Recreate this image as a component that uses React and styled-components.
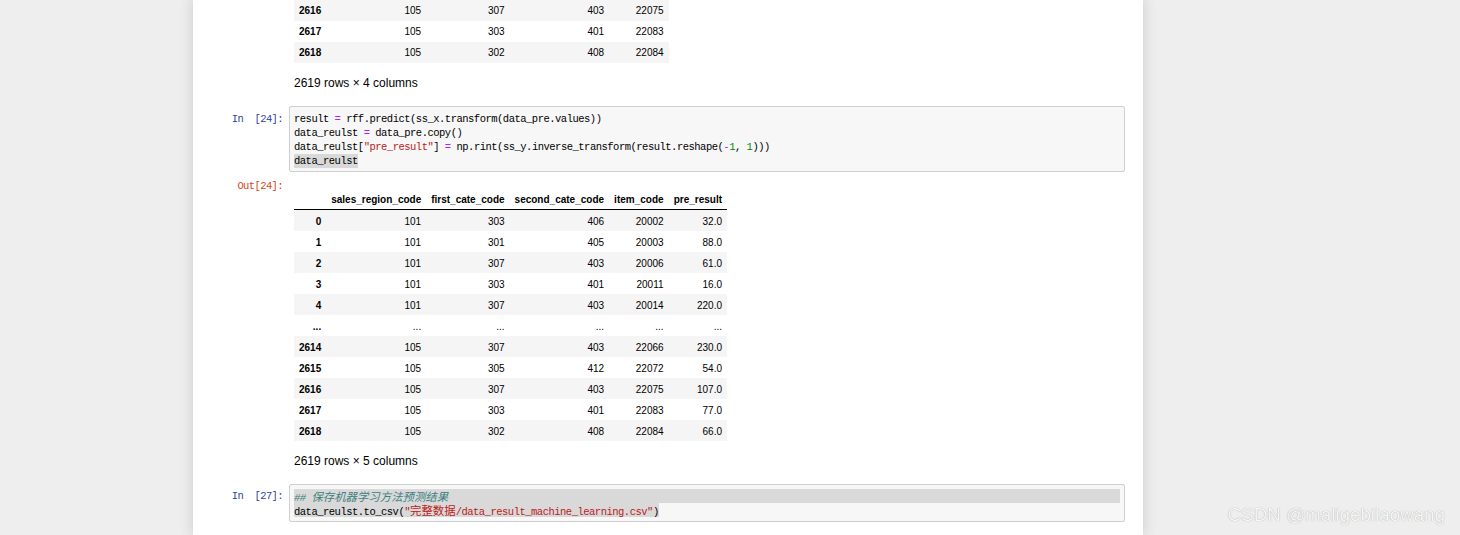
import React from 'react';
import styled, { createGlobalStyle } from 'styled-components';

const Global = createGlobalStyle`
  html, body { margin: 0; padding: 0; background: #eeeeee; }
  body { height: 535px; overflow: hidden; }
`;

const Page = styled.div`
  position: relative;
  height: 535px;
  overflow: hidden;
  background: #eeeeee;
`;

const Notebook = styled.div`
  margin-left: 193px;
  width: 950px;
  height: 535px;
  box-sizing: border-box;
  padding-right: 18px;
  background: #ffffff;
  box-shadow: 0 0 12px 1px rgba(87, 87, 87, 0.2);
  overflow: hidden;
`;

const Row = styled.div`
  display: flex;
  align-items: flex-start;
  margin-top: ${(p) => p.$mt || 0}px;
`;

const Prompt = styled.div`
  flex: 0 0 96px;
  box-sizing: border-box;
  padding-right: 6px;
  padding-top: ${(p) => p.$pt || 0}px;
  text-align: right;
  white-space: pre;
  font-family: "Liberation Mono", monospace;
  font-size: 10.5px;
  letter-spacing: -0.6px;
  line-height: 14px;
  color: ${(p) => (p.$out ? '#D84315' : '#303F9F')};
`;

const Body = styled.div`
  flex: 1 1 auto;
  min-width: 0;
  padding-left: 5px;
  padding-top: ${(p) => p.$pt || 0}px;
`;

const CodeBox = styled.div`
  flex: 1 1 auto;
  min-width: 0;
  background: #f7f7f7;
  border: 1px solid #cfcfcf;
  border-radius: 2px;
  padding: ${(p) => (p.$tight ? '4px 4px' : '5px 4px 3px')};
  font-family: "Liberation Mono", monospace;
  font-size: 10.5px;
  letter-spacing: -0.5px;
  color: #000;
`;

const Line = styled.div`
  height: 14px;
  line-height: 14px;
  white-space: pre;
  background: ${(p) => (p.$sel ? '#d9d9d9' : 'transparent')};
`;

const Sel = styled.span`
  display: inline-block;
  height: 14px;
  vertical-align: top;
  background: #d9d9d9;
`;

const Op = styled.span`color: #AA22FF;`;
const Num = styled.span`color: #008800;`;
const Str = styled.span`color: #BA2121;`;
const Cmt = styled.span`color: #408080; font-style: italic;`;
const Cjk = styled.span`
  font-family: "Noto Sans CJK SC", sans-serif;
  font-size: 11.4px;
  letter-spacing: 0;
`;

const Table = styled.table`
  border-collapse: collapse;
  border-spacing: 0;
  table-layout: fixed;
  width: ${(p) => p.$w}px;
  font-family: "Liberation Sans", Arial, sans-serif;
  font-size: 10px;
  color: #000;
`;

const Th = styled.th`
  padding: 6px 5px 4px;
  line-height: 11px;
  text-align: right;
  font-weight: bold;
  white-space: nowrap;
  border-bottom: 1px solid #000;
`;

const Tr = styled.tr`
  &:nth-child(odd) { background: #f5f5f5; }
`;

const Td = styled.td`
  padding: ${(p) => (p.$shift ? '6px 5px 4px' : '5px')};
  height: 11px;
  line-height: 11px;
  text-align: right;
  white-space: nowrap;
  font-weight: ${(p) => (p.$idx ? 'bold' : 'normal')};
`;

const Note = styled.p`
  margin: 12px 0 0;
  font-family: "Liberation Sans", Arial, sans-serif;
  font-size: 12px;
  line-height: 17px;
  color: #000;
`;

const Watermark = styled.div`
  position: absolute;
  right: 15px;
  bottom: 9px;
  font-family: "Liberation Sans", Arial, sans-serif;
  font-size: 18.8px;
  line-height: 22px;
  color: #f6f6f6;
  text-shadow: 0 0 1px #9a9a9a;
`;

const COLS = [32.2, 100, 83.4, 99.5, 59.5, 58.4];

const Cols = ({ n }) => (
  <colgroup>
    {COLS.slice(0, n).map((w, i) => (
      <col key={i} style={{ width: w }} />
    ))}
  </colgroup>
);

const sum = (n) => COLS.slice(0, n).reduce((a, b) => a + b, 0);

const DataRows = ({ rows, shift }) => (
  <tbody>
    {rows.map((r, i) => (
      <Tr key={i}>
        {r.map((c, j) => (
          <Td key={j} $idx={j === 0} $shift={shift}>{c}</Td>
        ))}
      </Tr>
    ))}
  </tbody>
);

const tail4 = [
  ['2616', '105', '307', '403', '22075'],
  ['2617', '105', '303', '401', '22083'],
  ['2618', '105', '302', '408', '22084'],
];

const headers = ['sales_region_code', 'first_cate_code', 'second_cate_code', 'item_code', 'pre_result'];

const rows5 = [
  ['0', '101', '303', '406', '20002', '32.0'],
  ['1', '101', '301', '405', '20003', '88.0'],
  ['2', '101', '307', '403', '20006', '61.0'],
  ['3', '101', '303', '401', '20011', '16.0'],
  ['4', '101', '307', '403', '20014', '220.0'],
  ['...', '...', '...', '...', '...', '...'],
  ['2614', '105', '307', '403', '22066', '230.0'],
  ['2615', '105', '305', '412', '22072', '54.0'],
  ['2616', '105', '307', '403', '22075', '107.0'],
  ['2617', '105', '303', '401', '22083', '77.0'],
  ['2618', '105', '302', '408', '22084', '66.0'],
];

export default function App() {
  return (
    <Page>
      <Global />
      <Notebook>
        <Row>
          <Prompt />
          <Body>
            <Table $w={sum(5)}>
              <Cols n={5} />
              <DataRows rows={tail4} />
            </Table>
            <Note>2619 rows × 4 columns</Note>
          </Body>
        </Row>

        <Row $mt={14}>
          <Prompt $pt={6}>{'In  [24]:'}</Prompt>
          <CodeBox>
            <Line>result <Op>=</Op> rff.predict(ss_x.transform(data_pre.values))</Line>
            <Line>data_reulst <Op>=</Op> data_pre.copy()</Line>
            <Line>
              data_reulst[<Str>"pre_result"</Str>] <Op>=</Op> np.rint(ss_y.inverse_transform(result.reshape(<Op>-</Op><Num>1</Num>, <Num>1</Num>)))
            </Line>
            <Line><Sel>data_reulst</Sel></Line>
          </CodeBox>
        </Row>

        <Row>
          <Prompt $out $pt={7}>{'Out[24]:'}</Prompt>
          <Body $pt={16}>
            <Table $w={sum(6)}>
              <Cols n={6} />
              <thead>
                <tr>
                  <Th />
                  {headers.map((h) => (
                    <Th key={h}>{h}</Th>
                  ))}
                </tr>
              </thead>
              <DataRows rows={rows5} shift />
            </Table>
            <Note>2619 rows × 5 columns</Note>
          </Body>
        </Row>

        <Row $mt={14}>
          <Prompt $pt={5}>{'In  [27]:'}</Prompt>
          <CodeBox $tight>
            <Line $sel><Cmt>## <Cjk>保存机器学习方法预测结果</Cjk></Cmt></Line>
            <Line>
              <Sel>data_reulst.to_csv(<Str>"<Cjk>完整数据</Cjk>/data_result_machine_learning.csv"</Str>)</Sel>
            </Line>
          </CodeBox>
        </Row>
      </Notebook>
      <Watermark>CSDN @maligebilaowang</Watermark>
    </Page>
  );
}
